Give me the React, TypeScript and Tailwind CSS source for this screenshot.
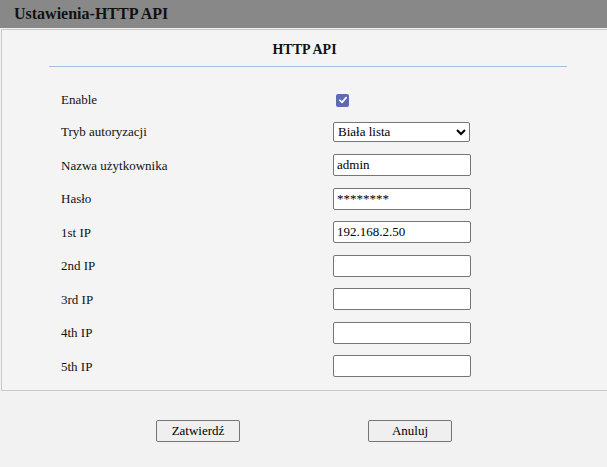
import React from "react";

const F = "font-['Liberation_Serif','Times_New_Roman',serif]";

function Row({ label, h, children }: { label: string; h: string; children?: React.ReactNode }) {
  return (
    <div className={`flex items-center ${h}`}>
      <div className={`w-[272px] text-[13px] text-[#111] ${F}`}>{label}</div>
      <div className="flex items-center">{children}</div>
    </div>
  );
}

function TextInput({ value }: { value?: string }) {
  return (
    <input
      readOnly
      value={value ?? ""}
      className={`h-[22px] w-[138px] rounded-[2px] border border-[#767676] bg-white px-[3px] text-[13px] text-black outline-none ${F}`}
    />
  );
}

export default function App() {
  return (
    <div className={`min-h-[467px] w-[607px] overflow-hidden bg-[#f2f2f2] ${F}`}>
      <div className={`flex h-[28px] items-center bg-[#888888] pl-[14px] text-[16px] font-bold text-[#111] ${F}`}>
        Ustawienia-HTTP API
      </div>
      <div className="mt-[1px] ml-[1px] h-[362px] w-[640px] border border-[#c9c9c9] bg-[#f4f4f4]">
        <div className="w-[605px]">
          <div className={`pt-[10px] text-center text-[14px] font-bold leading-[20px] text-[#111] ${F}`}>HTTP API</div>
          <div className="ml-[47px] mt-[6px] h-px w-[518px] bg-[#a9c1dd]" />
          <div className="pl-[59px] pt-[18px]">
            <Row label="Enable" h="h-[30px]">
              <span className="ml-[3px] flex h-[13px] w-[13px] items-center justify-center rounded-[2px] bg-[#5e6bb2]">
                <svg viewBox="0 0 12 12" className="h-[10px] w-[10px]">
                  <path d="M2.2 6.3 L4.8 8.8 L9.8 3.2" fill="none" stroke="white" strokeWidth="2" strokeLinecap="round" strokeLinejoin="round" />
                </svg>
              </span>
            </Row>
            <Row label="Tryb autoryzacji" h="h-[33.5px]">
              <select
                className={`h-[20px] w-[137px] rounded-[2px] border border-[#767676] bg-white text-[13px] text-black ${F}`}
                defaultValue="b"
              >
                <option value="b">Biała lista</option>
              </select>
            </Row>
            <Row label="Nazwa użytkownika" h="h-[33.5px]">
              <TextInput value="admin" />
            </Row>
            <Row label="Hasło" h="h-[33.5px]">
              <TextInput value="********" />
            </Row>
            <Row label="1st IP" h="h-[33.5px]">
              <TextInput value="192.168.2.50" />
            </Row>
            <Row label="2nd IP" h="h-[33.5px]">
              <TextInput />
            </Row>
            <Row label="3rd IP" h="h-[33.5px]">
              <TextInput />
            </Row>
            <Row label="4th IP" h="h-[33.5px]">
              <TextInput />
            </Row>
            <Row label="5th IP" h="h-[33.5px]">
              <TextInput />
            </Row>
          </div>
        </div>
      </div>
      <div className="flex pt-[29px]">
        <button
          className={`ml-[156px] h-[22px] w-[84px] rounded-[2px] border border-[#767676] bg-[#efefef] text-[13px] text-black ${F}`}
        >
          Zatwierdź
        </button>
        <button
          className={`ml-[128px] h-[22px] w-[84px] rounded-[2px] border border-[#767676] bg-[#efefef] text-[13px] text-black ${F}`}
        >
          Anuluj
        </button>
      </div>
    </div>
  );
}
